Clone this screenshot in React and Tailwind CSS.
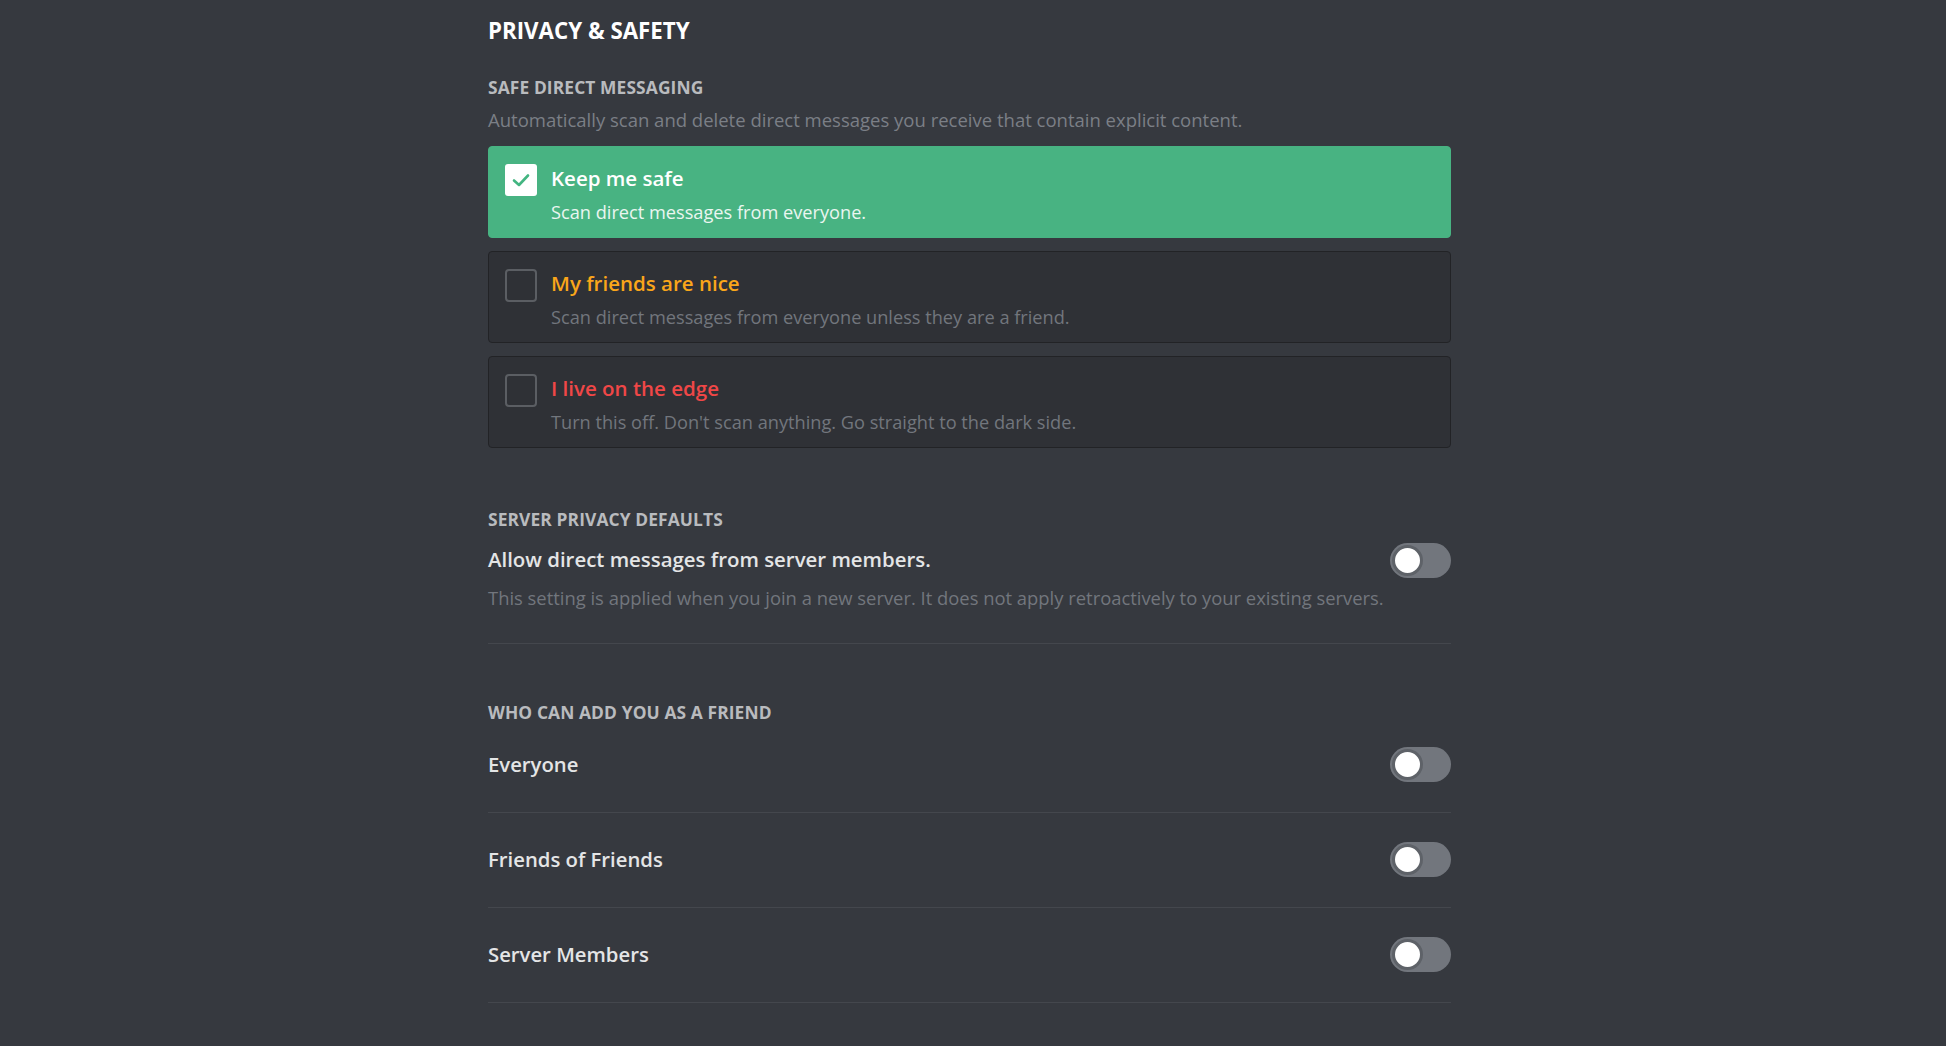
import React from "react";

const font = { fontFamily: '"Open Sans", "Noto Sans", sans-serif' };

function Check({ checked }) {
  if (checked) {
    return (
      <div className="w-[32px] h-[32px] rounded-[3px] bg-white flex items-center justify-center shrink-0">
        <svg width="22" height="22" viewBox="0 0 22 22" fill="none">
          <path d="M4 11.5 L9 16 L18 6.5" stroke="#43b581" strokeWidth="2.6" strokeLinecap="round" strokeLinejoin="round" />
        </svg>
      </div>
    );
  }
  return <div className="w-[32px] h-[33px] rounded-[4px] border-2 border-[#5b5e63] shrink-0" />;
}

function Card({ checked, title, sub, titleColor }) {
  return (
    <div
      className={
        "flex items-start h-[92px] rounded-[4px] pl-[16px] pt-[17px] " +
        (checked ? "bg-[#48b382] border border-[#48b382]" : "bg-[#2f3136] border border-[#222326]")
      }
    >
      <Check checked={checked} />
      <div className="ml-[14px] pt-[1px] flex flex-col">
        <div className={"text-[20.5px] leading-[26px] font-semibold " + titleColor}>{title}</div>
        <div className={"mt-[9px] text-[18.2px] leading-[24px] " + (checked ? "text-[#eaf6f0]" : "text-[#72767d]")}>{sub}</div>
      </div>
    </div>
  );
}

function Toggle() {
  return (
    <div className="w-[61px] h-[35px] rounded-full bg-[#72767d] flex items-center pl-[2px] shrink-0">
      <div className="w-[31px] h-[31px] rounded-full bg-white border-[3px] border-[#5e6268]" />
    </div>
  );
}

function FriendRow({ label, first }) {
  return (
    <div className={"border-b border-[#44474d] pb-[31px] " + (first ? "pt-[25px]" : "pt-[29px]")}>
      <div className="flex items-center justify-between h-[34px]">
        <div className="text-[20.3px] font-semibold text-[#e4e5e6]">{label}</div>
        <Toggle />
      </div>
    </div>
  );
}

export default function App() {
  return (
    <div className="min-h-screen w-full bg-[#36393f] overflow-hidden" style={font}>
      <div className="ml-[488px] w-[963px] pt-[17px]">
        <h1 className="text-[22.3px] leading-[28px] font-bold text-white">PRIVACY &amp; SAFETY</h1>
        <div className="mt-[32px] text-[17.4px] leading-[20px] font-bold tracking-[0.1px] text-[#b9bbbe]">SAFE DIRECT MESSAGING</div>
        <div className="mt-[12px] text-[18.5px] leading-[22px] text-[#7b7f86]">
          Automatically scan and delete direct messages you receive that contain explicit content.
        </div>
        <div className="mt-[15px] flex flex-col gap-[13px]">
          <Card checked title="Keep me safe" sub="Scan direct messages from everyone." titleColor="text-white" />
          <Card title="My friends are nice" sub="Scan direct messages from everyone unless they are a friend." titleColor="text-[#faa61a]" />
          <Card title="I live on the edge" sub="Turn this off. Don't scan anything. Go straight to the dark side." titleColor="text-[#f04747]" />
        </div>

        <div className="mt-[61px] text-[17.4px] leading-[20px] font-bold tracking-[0.1px] text-[#b9bbbe]">SERVER PRIVACY DEFAULTS</div>
        <div className="mt-[14px] flex items-center justify-between h-[34px]">
          <div className="text-[20.4px] leading-[28px] -mt-[2px] font-semibold text-[#e4e5e6]">Allow direct messages from server members.</div>
          <Toggle />
        </div>
        <div className="mt-[10px] text-[18.4px] leading-[22px] text-[#72767d] pb-[34px] border-b border-[#44474d]">
          This setting is applied when you join a new server. It does not apply retroactively to your existing servers.
        </div>

        <div className="mt-[58px] text-[17.4px] leading-[20px] font-bold tracking-[0.1px] text-[#b9bbbe]">WHO CAN ADD YOU AS A FRIEND</div>
        <FriendRow first label="Everyone" />
        <FriendRow label="Friends of Friends" />
        <FriendRow label="Server Members" />
      </div>
    </div>
  );
}
